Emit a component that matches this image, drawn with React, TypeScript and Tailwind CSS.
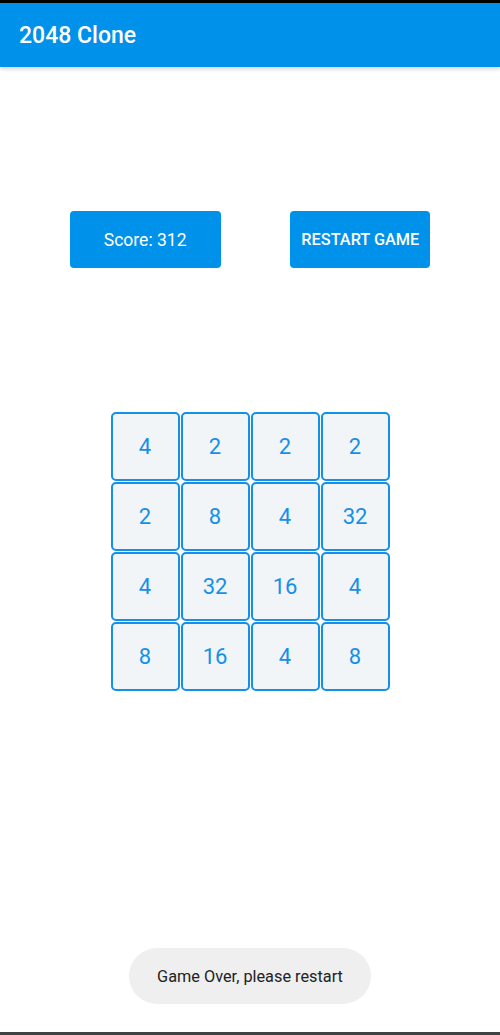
import React from "react";

const board = [
  [4, 2, 2, 2],
  [2, 8, 4, 32],
  [4, 32, 16, 4],
  [8, 16, 4, 8],
];

export default function App() {
  return (
    <div
      className="flex h-[1035px] w-[500px] flex-col bg-white"
      style={{ fontFamily: "Roboto, 'Noto Sans', sans-serif" }}
    >
      <div className="h-[3px] bg-black" />
      <header className="relative flex h-[64px] items-center bg-[#0091ea] px-[19px] pt-[1px] shadow-[0_2px_4px_rgba(0,0,0,0.18)]">
        <h1 className="text-[23px] font-medium leading-none text-white">2048 Clone</h1>
      </header>

      <div className="mt-[144px] flex justify-evenly">
        <button className="flex h-[57px] w-[151px] items-center justify-center rounded-[4px] bg-[#0091ea] pt-[1px] text-[17.5px] text-white">
          Score: 312
        </button>
        <button className="flex h-[57px] w-[140px] items-center justify-center rounded-[4px] bg-[#0091ea] pt-[1px] text-[16.3px] font-medium uppercase text-white">
          Restart Game
        </button>
      </div>

      <div className="mt-[144px] flex justify-center">
        <div className="grid grid-cols-[repeat(4,69px)] gap-px">
          {board.flat().map((v, i) => (
            <div
              key={i}
              className="flex h-[69px] w-[69px] items-center justify-center rounded-[5px] border-2 border-[#1590e8] bg-[#f1f5f7] text-[22px] text-[#1590e8]"
            >
              {v}
            </div>
          ))}
        </div>
      </div>

      <div className="flex-1" />

      <div className="flex justify-center">
        <div className="flex h-[56px] w-[242px] items-center justify-center rounded-full bg-[#efefef] pt-[2px] text-[16.3px] text-[#222222]">
          Game Over, please restart
        </div>
      </div>

      <div className="h-[28px]" />
      <div className="h-[3px] bg-[#3d4245]" />
    </div>
  );
}
